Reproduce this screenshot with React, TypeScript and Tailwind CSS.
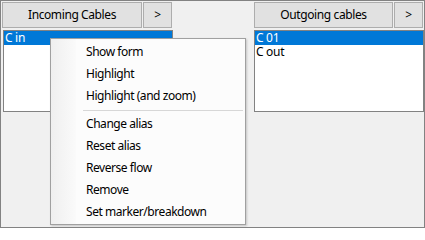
import React from "react";

const font = { fontFamily: '"Noto Sans", "Liberation Sans", sans-serif' };

function Btn({ label, w }: { label: string; w: string }) {
  return (
    <div
      className={`${w} h-[26px] flex items-center justify-center border border-[#adadad] bg-[#e1e1e1] text-[12px] tracking-[-0.4px] text-black`}
    >
      {label}
    </div>
  );
}

function MenuItem({ label }: { label: string }) {
  return (
    <div className="h-[22px] flex items-center pl-[35px] text-[12px] tracking-[-0.45px] text-black">{label}</div>
  );
}

export default function App() {
  return (
    <div
      className="relative w-[425px] h-[228px] border border-[#828282] bg-[#f0f0f0] overflow-hidden"
      style={font}
    >
      <div className="flex pt-[1px] pl-[1px]">
        <div className="w-[171px] flex flex-col">
          <div className="flex">
            <Btn label="Incoming Cables" w="w-[140px]" />
            <div className="w-[1px]" />
            <Btn label=">" w="w-[29px]" />
          </div>
          <div className="mt-[2px] ml-[1px] w-[170px] h-[82px] border border-[#828282] bg-white">
            <div className="h-[14px] bg-[#0078d7] text-white text-[12px] leading-[14px] tracking-[-0.3px] pl-[1px]">C in</div>
          </div>
        </div>
        <div className="w-[81px]" />
        <div className="w-[170px] flex flex-col">
          <div className="flex">
            <Btn label="Outgoing cables" w="w-[139px]" />
            <div className="w-[1px]" />
            <Btn label=">" w="w-[29px]" />
          </div>
          <div className="mt-[2px] w-[170px] h-[82px] border border-[#828282] bg-white">
            <div className="h-[14px] bg-[#0078d7] text-white text-[12px] leading-[14px] tracking-[-0.3px] pl-[1px]">C 01</div>
            <div className="h-[14px] text-black text-[12px] leading-[14px] tracking-[-0.3px] pl-[1px]">C out</div>
          </div>
        </div>
      </div>

      <div className="absolute left-[49px] top-[37px] w-[196px] h-[187px] border border-[#a0a0a0] bg-[#fcfcfc] shadow-[1px_1px_2px_rgba(0,0,0,0.18)]">
        <div className="absolute left-0 top-0 bottom-0 w-[25px] bg-gradient-to-r from-[#efefef] to-[#fafafa]" />
        <div className="relative flex flex-col pt-[2px] pb-[1px]">
          <MenuItem label="Show form" />
          <MenuItem label="Highlight" />
          <MenuItem label="Highlight (and zoom)" />
          <div className="h-[6px] flex items-center pl-[32px] pr-[2px]">
            <div className="h-[1px] w-full bg-[#d7d7d7]" />
          </div>
          <MenuItem label="Change alias" />
          <MenuItem label="Reset alias" />
          <MenuItem label="Reverse flow" />
          <MenuItem label="Remove" />
          <MenuItem label="Set marker/breakdown" />
        </div>
      </div>
    </div>
  );
}
